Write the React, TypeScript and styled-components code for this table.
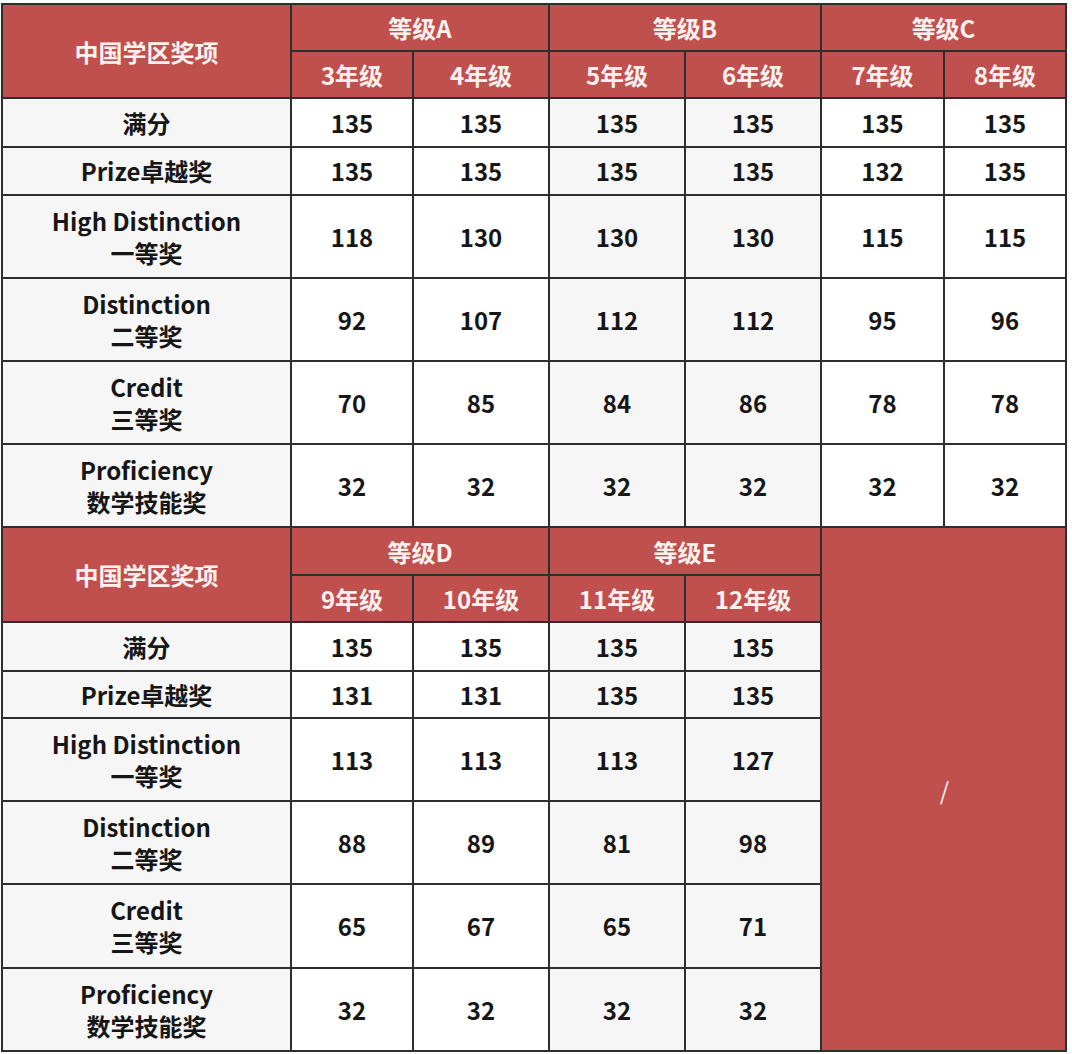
import React from "react";
import styled, { createGlobalStyle } from "styled-components";

const GlobalStyle = createGlobalStyle`
  html, body {
    margin: 0;
    padding: 0;
    background: #ffffff;
  }
  body {
    font-family: "Noto Sans CJK SC", "Noto Sans", sans-serif;
  }
`;

const RED = "#c0504d";

const Page = styled.div`
  padding: 3px 0 0 1px;
`;

const Sheet = styled.div`
  display: inline-grid;
  grid-template-columns: 287px 120px 134px 134px 134px 121px 120px;
  grid-template-rows: 45px 45px 47px 46px 81px 81px 81px 81px 46px 45px 47px 45px 81px 81px 82px 81px;
  gap: 2px;
  padding: 2px;
  background: #2e2e2e;
`;

const Cell = styled.div<{ $shade?: boolean }>`
  display: flex;
  align-items: center;
  justify-content: center;
  text-align: center;
  background: ${(p) => (p.$shade ? "#f6f6f6" : "#ffffff")};
  color: #161616;
  font-weight: 700;
  font-size: 24px;
  line-height: 32px;
`;

const Label = styled(Cell)`
  flex-direction: column;
  background: #f6f6f6;
`;

const Head = styled.div<{ $col: string; $row: string }>`
  grid-column: ${(p) => p.$col};
  grid-row: ${(p) => p.$row};
  display: flex;
  align-items: center;
  justify-content: center;
  background: ${RED};
  color: #fdf1ef;
  font-weight: 700;
  font-size: 24px;
`;

const Blank = styled(Head)`
  font-weight: 400;
  padding-left: 2px;
`;

type Row = { en?: string; zh: string; values: number[] };

const table1: Row[] = [
  { zh: "满分", values: [135, 135, 135, 135, 135, 135] },
  { en: "Prize", zh: "卓越奖", values: [135, 135, 135, 135, 132, 135] },
  { en: "High Distinction", zh: "一等奖", values: [118, 130, 130, 130, 115, 115] },
  { en: "Distinction", zh: "二等奖", values: [92, 107, 112, 112, 95, 96] },
  { en: "Credit", zh: "三等奖", values: [70, 85, 84, 86, 78, 78] },
  { en: "Proficiency", zh: "数学技能奖", values: [32, 32, 32, 32, 32, 32] },
];

const table2: Row[] = [
  { zh: "满分", values: [135, 135, 135, 135] },
  { en: "Prize", zh: "卓越奖", values: [131, 131, 135, 135] },
  { en: "High Distinction", zh: "一等奖", values: [113, 113, 113, 127] },
  { en: "Distinction", zh: "二等奖", values: [88, 89, 81, 98] },
  { en: "Credit", zh: "三等奖", values: [65, 67, 65, 71] },
  { en: "Proficiency", zh: "数学技能奖", values: [32, 32, 32, 32] },
];

// shaded columns: group B in the first table, group E in the second
const shade1 = [false, false, true, true, false, false];
const shade2 = [false, false, true, true];

const RowLabel: React.FC<{ row: Row }> = ({ row }) =>
  row.en === "Prize" ? (
    <Label>{row.en + row.zh}</Label>
  ) : row.en ? (
    <Label>
      <span>{row.en}</span>
      <span>{row.zh}</span>
    </Label>
  ) : (
    <Label>{row.zh}</Label>
  );

const App: React.FC = () => {
  return (
    <Page>
      <GlobalStyle />
      <Sheet>
        <Head $col="1" $row="1 / span 2">中国学区奖项</Head>
        <Head $col="2 / span 2" $row="1">等级A</Head>
        <Head $col="4 / span 2" $row="1">等级B</Head>
        <Head $col="6 / span 2" $row="1">等级C</Head>
        {[3, 4, 5, 6, 7, 8].map((g, i) => (
          <Head key={g} $col={String(i + 2)} $row="2">
            {g}年级
          </Head>
        ))}
        {table1.map((row) => (
          <React.Fragment key={"a" + row.zh}>
            <RowLabel row={row} />
            {row.values.map((v, i) => (
              <Cell key={i} $shade={shade1[i]}>
                {v}
              </Cell>
            ))}
          </React.Fragment>
        ))}

        <Head $col="1" $row="9 / span 2">中国学区奖项</Head>
        <Head $col="2 / span 2" $row="9">等级D</Head>
        <Head $col="4 / span 2" $row="9">等级E</Head>
        <Blank $col="6 / span 2" $row="9 / span 8">/</Blank>
        {[9, 10, 11, 12].map((g, i) => (
          <Head key={g} $col={String(i + 2)} $row="10">
            {g}年级
          </Head>
        ))}
        {table2.map((row, r) => (
          <React.Fragment key={"b" + row.zh}>
            <RowLabel row={row} />
            {row.values.map((v, i) => (
              <Cell
                key={i}
                $shade={shade2[i]}
                style={{ gridRow: 11 + r, gridColumn: i + 2 }}
              >
                {v}
              </Cell>
            ))}
          </React.Fragment>
        ))}
      </Sheet>
    </Page>
  );
};

export default App;
